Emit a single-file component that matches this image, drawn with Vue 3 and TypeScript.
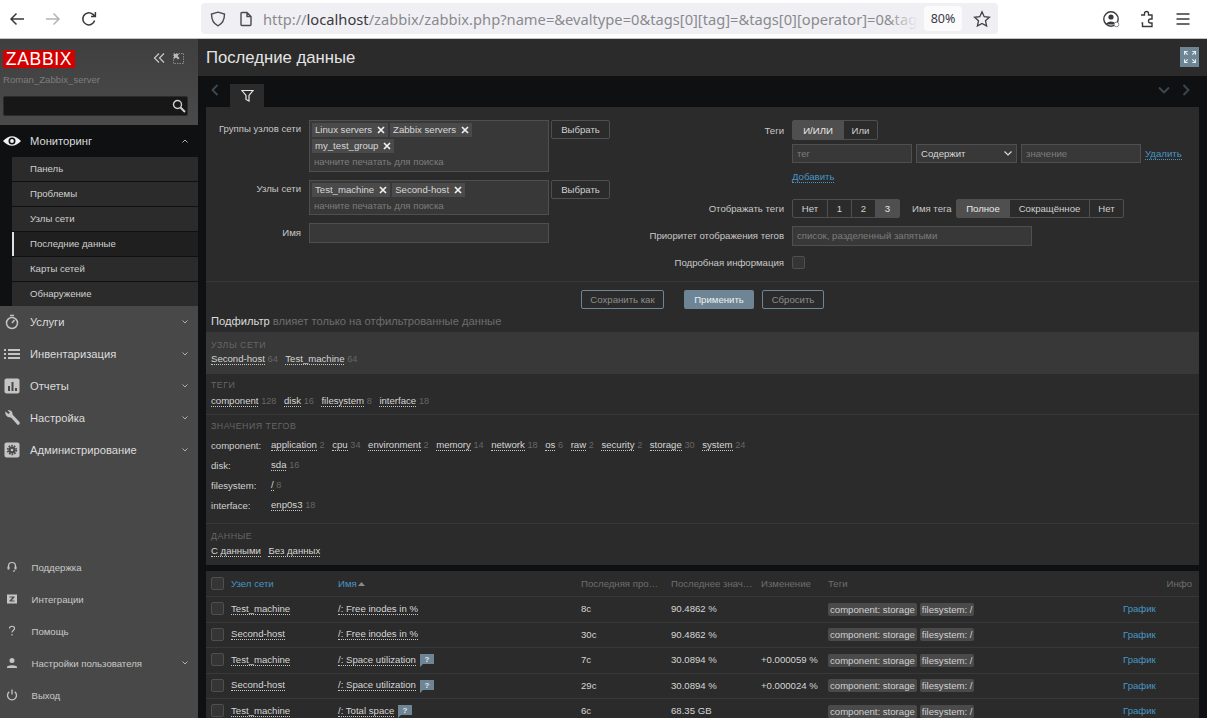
<script setup lang="ts">
const subItems = [
  { label: 'Панель' }, { label: 'Проблемы' }, { label: 'Узлы сети' },
  { label: 'Последние данные', active: true }, { label: 'Карты сетей' }, { label: 'Обнаружение' },
]
const mainItems = [
  { label: 'Услуги', icon: 'clock' }, { label: 'Инвентаризация', icon: 'list' }, { label: 'Отчеты', icon: 'chart' },
  { label: 'Настройка', icon: 'wrench' }, { label: 'Администрирование', icon: 'gear' },
]
const bottomItems = [
  { label: 'Поддержка', icon: 'head' }, { label: 'Интеграции', icon: 'z' }, { label: 'Помощь', icon: 'q' },
  { label: 'Настройки пользователя', icon: 'user', chev: true }, { label: 'Выход', icon: 'power' },
]
const tagValues = [
  { k: 'component:', v: [['application', 2], ['cpu', 34], ['environment', 2], ['memory', 14], ['network', 18], ['os', 6], ['raw', 2], ['security', 2], ['storage', 30], ['system', 24]] },
  { k: 'disk:', v: [['sda', 16]] },
  { k: 'filesystem:', v: [['/', 8]] },
  { k: 'interface:', v: [['enp0s3', 18]] },
]
const rows = [
  { host: 'Test_machine', name: '/: Free inodes in %', hint: false, age: '8с', val: '90.4862 %', ch: '' },
  { host: 'Second-host', name: '/: Free inodes in %', hint: false, age: '30с', val: '90.4862 %', ch: '' },
  { host: 'Test_machine', name: '/: Space utilization', hint: true, age: '7с', val: '30.0894 %', ch: '+0.000059 %' },
  { host: 'Second-host', name: '/: Space utilization', hint: true, age: '29с', val: '30.0894 %', ch: '+0.000024 %' },
  { host: 'Test_machine', name: '/: Total space', hint: true, age: '6с', val: '68.35 GB', ch: '' },
]
const groupChips = ['Linux servers', 'Zabbix servers', 'my_test_group']
const hostChips = ['Test_machine', 'Second-host']
</script>

<template>
  <div class="page">
    <header class="browser">
      <svg class="bi b-back" width="16" height="16" viewBox="0 0 16 16"><path d="M15 8H2M7.500 2.500 2 8l5.500 5.500" fill="none" stroke="#3a3a3e" stroke-width="1.500"/></svg>
      <svg class="bi b-fwd" width="16" height="16" viewBox="0 0 16 16"><path d="M1 8h13M8.500 2.500 14 8l-5.500 5.500" fill="none" stroke="#b4b4b8" stroke-width="1.500"/></svg>
      <svg class="bi b-rel" width="16" height="16" viewBox="0 0 16 16"><path d="M13.600 9.500A6 6 0 1 1 11.600 3.200L14 5.200M14.400 1v4.600H10" fill="none" stroke="#3a3a3e" stroke-width="1.500"/></svg>
      <div class="urlbar">
        <svg class="shield" width="16" height="16" viewBox="0 0 16 16"><path d="M8 1.200 14.500 3c0 6-1.500 9.500-6.500 11.800C3 12.500 1.500 9 1.500 3z" fill="none" stroke="#4a4a4f" stroke-width="1.400"/></svg>
        <svg class="docicon" width="14" height="16" viewBox="0 0 14 16"><path d="M2 2.500Q2 1.500 3 1.500h5l4 4v8q0 1-1 1H3q-1 0-1-1z M8 1.500v4h4" fill="none" stroke="#4a4a4f" stroke-width="1.400"/></svg>
        <div class="url"><span class="dim">http://</span>localhost<span class="dim">/zabbix/zabbix.php?name=&amp;evaltype=0&amp;tags[0][tag]=&amp;tags[0][operator]=0&amp;tag</span><i class="fade"></i></div>
        <div class="zoom">80%</div>
        <svg class="star" width="18" height="18" viewBox="0 0 18 18"><path d="M9 1.800 11.200 6.700l5.200.6-3.900 3.500 1.100 5.200L9 13.400 4.400 16l1.100-5.200L1.600 7.300l5.200-.6z" fill="none" stroke="#3f3f44" stroke-width="1.300"/></svg>
      </div>
      <svg class="bi b-acc" width="18" height="18" viewBox="0 0 18 18"><circle cx="9" cy="9" r="7.200" fill="none" stroke="#3a3a3e" stroke-width="1.400"/><circle cx="9" cy="7" r="2.600" fill="#3a3a3e"/><path d="M4 13.500q5-4 10 0v1H4z" fill="#3a3a3e"/><circle cx="14.500" cy="14.500" r="2.300" fill="#fff" stroke="#8a8a8e"/></svg>
      <svg class="bi b-ext" width="18" height="18" viewBox="0 0 18 18"><path d="M3 5h3.500V3.500a2 2 0 0 1 4 0V5H14v4H12.500a2 2 0 0 0 0 4H14v3.500H4.500V13H3.500" fill="none" stroke="#3a3a3e" stroke-width="1.400"/></svg>
      <svg class="bi b-menu" width="16" height="16" viewBox="0 0 16 16"><path d="M1.500 3h13M1.500 8h13M1.500 13h13" stroke="#3a3a3e" stroke-width="1.400"/></svg>
    </header>

    <div class="app">
      <aside class="side">
        <div class="brand">
          <div class="brand-top">
            <span class="logo">ZABBIX</span>
            <span class="brand-tools">
              <svg width="12" height="12" viewBox="0 0 12 12"><path d="M6 1.500 1.500 6 6 10.500M11 1.500 6.500 6l4.500 4.500" fill="none" stroke="#c8c8c8" stroke-width="1.200"/></svg>
              <svg width="11" height="11" viewBox="0 0 11 11"><path d="M.5.500h10v10H.5z" fill="none" stroke="#8a8a8a" stroke-dasharray="1.500 1"/><path d="M1 1h5L4.500 3 6.500 5 5 6.500 3 4.500 1 6z" fill="#bbb"/></svg>
            </span>
          </div>
          <div class="server">Roman_Zabbix_server</div>
          <div class="search">
            <svg width="14" height="14" viewBox="0 0 14 14"><circle cx="5.500" cy="5.500" r="4" fill="none" stroke="#d0d0d0" stroke-width="1.400"/><path d="m8.500 8.500 4.500 4.500" stroke="#d0d0d0" stroke-width="2"/></svg>
          </div>
        </div>

        <div class="monitor">
          <div class="mrow top">
            <svg class="eye" width="18" height="12" viewBox="0 0 18 12"><path d="M0 6q9-9.500 18 0-9 9.500-18 0z" fill="#f2f2f2"/><circle cx="9" cy="6" r="3.500" fill="#0e1012"/><circle cx="9" cy="6" r="1.900" fill="#f2f2f2"/></svg>
            <span class="mlabel">Мониторинг</span>
            <svg class="chev" width="6" height="4" viewBox="0 0 6 4"><path d="m.5 3.500 2.500-2.500 2.500 2.500" fill="none" stroke="#b0b0b0"/></svg>
          </div>
          <div class="subs">
            <div v-for="s in subItems" :key="s.label" class="sub" :class="{ active: s.active }">{{ s.label }}</div>
          </div>
        </div>

        <div class="mains">
          <div v-for="m in mainItems" :key="m.label" class="mrow">
            <svg class="micon" width="16" height="16" viewBox="0 0 16 16">
              <g v-if="m.icon === 'clock'" fill="none" stroke="#c4c4c4" stroke-width="1.500"><circle cx="8" cy="9" r="5.500"/><path d="M6 1.500h4M8 9l2.500-3"/></g>
              <g v-else-if="m.icon === 'list'" fill="#c4c4c4"><path d="M0 3h2v2H0zM4 3h12v2H4zM0 7h2v2H0zM4 7h12v2H4zM0 11h2v2H0zM4 11h12v2H4z"/></g>
              <g v-else-if="m.icon === 'chart'"><rect x=".5" y=".5" width="15" height="15" rx="2" fill="#c4c4c4"/><path d="M4 8h2v5H4zM7.500 4h2v9h-2zM11 10h2v3h-2z" fill="#484848"/></g>
              <path v-else-if="m.icon === 'wrench'" d="M1.500 1.500 4.500 4 6 2.500 3.500.5C6-.5 9 1 8.500 4.500L15.500 12c.6 1 .2 2.500-1.800 3L7 7.500C3.500 8 .5 5 1.500 1.500z" fill="#c4c4c4"/>
              <g v-else><rect x=".5" y=".5" width="15" height="15" rx="2" fill="#c4c4c4"/><circle cx="8" cy="8" r="4.300" fill="none" stroke="#484848" stroke-width="1.800" stroke-dasharray="1.600 1.100"/><circle cx="8" cy="8" r="3.600" fill="#484848"/><circle cx="8" cy="8" r="1.300" fill="#c4c4c4"/></g>
            </svg>
            <span class="mlabel">{{ m.label }}</span>
            <svg class="chev" width="6" height="4" viewBox="0 0 6 4"><path d="m.5.500 2.500 2.500 2.500-2.500" fill="none" stroke="#b0b0b0"/></svg>
          </div>
        </div>

        <div class="bottom">
          <div v-for="b in bottomItems" :key="b.label" class="brow">
            <svg class="bicon" width="12" height="12" viewBox="0 0 12 12">
              <g v-if="b.icon === 'head'"><path d="M2.500 7V5a3.500 3.500 0 0 1 7 0v2M9 9.500 7 10.500" fill="none" stroke="#c4c4c4" stroke-width="1.200"/><path d="M1.500 5.500h2v3h-2zM8.500 5.500h2v3h-2z" fill="#c4c4c4"/></g>
              <g v-else-if="b.icon === 'z'"><rect x="1" y="1.500" width="10" height="9" fill="#c4c4c4"/><path d="M3.500 3.500h5v1l-3 3h3v1h-5v-1l3-3h-3z" fill="#484848"/></g>
              <path v-else-if="b.icon === 'user'" d="M3.500 3.500a2.500 2.500 0 1 1 5 0 2.500 2.500 0 0 1-5 0zM1 9.500q5-2.500 10 0V11H1z" fill="#c4c4c4"/>
              <path v-else-if="b.icon === 'power'" d="M6 .5v5M3.300 2.800a4.500 4.500 0 1 0 5.400 0" fill="none" stroke="#c4c4c4" stroke-width="1.300"/>
              <path v-else d="M3.500 3.500C3.500.5 8.500.5 8.500 3.500c0 2-2.500 2-2.500 4M6 9v1.500" fill="none" stroke="#c4c4c4" stroke-width="1.200"/>
            </svg>
            <span class="blabel">{{ b.label }}</span>
            <svg v-if="b.chev" class="chev" width="6" height="4" viewBox="0 0 6 4"><path d="m.5.500 2.500 2.500 2.500-2.500" fill="none" stroke="#b0b0b0"/></svg>
          </div>
        </div>
      </aside>

      <main class="main">
        <div class="head">
          <h1>Последние данные</h1>
          <div class="fs">
            <svg width="18" height="18" viewBox="0 0 18 18" fill="none" stroke="#e8eef2" stroke-width="1.400"><path d="M2 6V2h4M16 6V2h-4M2 12v4h4M16 12v4h-4M3 3l3 3M15 3l-3 3M3 15l3-3M15 15l-3-3"/></svg>
          </div>
        </div>

        <div class="tabs">
          <svg class="nav-l" width="8" height="12" viewBox="0 0 8 12"><path d="M6.500 1 1.500 6l5 5" fill="none" stroke="#3e4a52" stroke-width="1.800"/></svg>
          <div class="tab">
            <svg width="13" height="13" viewBox="0 0 13 13"><path d="M1 1.500h11L8 6.500v5.500L5 10.500v-4z" fill="none" stroke="#e8e8e8" stroke-width="1.200"/></svg>
          </div>
          <span class="grow"></span>
          <svg width="12" height="8" viewBox="0 0 12 8"><path d="m1 1.500 5 5 5-5" fill="none" stroke="#3e4a52" stroke-width="1.800"/></svg>
          <svg class="nav-r" width="8" height="12" viewBox="0 0 8 12"><path d="m1.500 1 5 5-5 5" fill="none" stroke="#3e4a52" stroke-width="1.800"/></svg>
        </div>

        <section class="panel">
          <div class="form">
            <div class="col-l">
              <div class="fr">
                <label>Группы узлов сети</label>
                <div class="ms h52">
                  <div class="chips">
                    <span v-for="c in groupChips" :key="c" class="chip">{{ c }}<svg width="8" height="8" viewBox="0 0 8 8"><path d="m1 1 6 6M7 1 1 7" stroke="#f0f0f0" stroke-width="1.700"/></svg></span>
                  </div>
                  <div class="ph">начните печатать для поиска</div>
                </div>
                <button class="sel">Выбрать</button>
              </div>
              <div class="fr">
                <label>Узлы сети</label>
                <div class="ms h35">
                  <div class="chips">
                    <span v-for="c in hostChips" :key="c" class="chip">{{ c }}<svg width="8" height="8" viewBox="0 0 8 8"><path d="m1 1 6 6M7 1 1 7" stroke="#f0f0f0" stroke-width="1.700"/></svg></span>
                  </div>
                  <div class="ph">начните печатать для поиска</div>
                </div>
                <button class="sel">Выбрать</button>
              </div>
              <div class="fr mid">
                <label>Имя</label>
                <div class="inp name"></div>
              </div>
            </div>

            <div class="col-r">
              <div class="rr r1">
                <label>Теги</label>
                <div class="seg"><span class="on w-and">И/ИЛИ</span><span class="w-or">Или</span></div>
              </div>
              <div class="rr r2">
                <label></label>
                <div class="tagrow">
                  <div class="inp t1 ph2">тег</div>
                  <div class="inp t2">Содержит<svg width="8" height="5" viewBox="0 0 8 5"><path d="m.5.500 3.500 3.500 3.500-3.500" fill="none" stroke="#e0e0e0" stroke-width="1.100"/></svg></div>
                  <div class="inp t1 ph2">значение</div>
                  <a class="lnk">Удалить</a>
                </div>
              </div>
              <div class="rr r3"><label></label><a class="lnk">Добавить</a></div>
              <div class="rr r4">
                <label>Отображать теги</label>
                <div class="seg"><span class="n1">Нет</span><span class="n2">1</span><span class="n2">2</span><span class="on n2">3</span></div>
                <span class="lab2">Имя тега</span>
                <div class="seg"><span class="on n3">Полное</span><span class="n4">Сокращённое</span><span class="n1">Нет</span></div>
              </div>
              <div class="rr r5">
                <label>Приоритет отображения тегов</label>
                <div class="inp prio ph2">список, разделенный запятыми</div>
              </div>
              <div class="rr r6">
                <label>Подробная информация</label>
                <span class="cb small"></span>
              </div>
            </div>
          </div>

          <div class="actions">
            <button class="out w83">Сохранить как</button>
            <button class="apply">Применить</button>
            <button class="out w62">Сбросить</button>
          </div>

          <div class="subf"><span>Подфильтр</span> <em>влияет только на отфильтрованные данные</em></div>

          <div class="sec s-hosts">
            <div class="st">Узлы сети</div>
            <div class="vals">
              <span class="it"><u>Second-host</u> <i>64</i></span>
              <span class="it"><u>Test_machine</u> <i>64</i></span>
            </div>
          </div>
          <div class="sec s-tags">
            <div class="st">Теги</div>
            <div class="vals">
              <span class="it"><u>component</u> <i>128</i></span>
              <span class="it"><u>disk</u> <i>16</i></span>
              <span class="it"><u>filesystem</u> <i>8</i></span>
              <span class="it"><u>interface</u> <i>18</i></span>
            </div>
          </div>
          <div class="sec s-vals">
            <div class="st">Значения тегов</div>
            <div v-for="t in tagValues" :key="t.k" class="tv">
              <span class="tk">{{ t.k }}</span>
              <div class="vals">
                <span v-for="v in t.v" :key="v[0]" class="it"><u>{{ v[0] }}</u> <i>{{ v[1] }}</i></span>
              </div>
            </div>
          </div>
          <div class="sec s-data">
            <div class="st">Данные</div>
            <div class="vals">
              <span class="it"><u>С данными</u></span>
              <span class="it"><u>Без данных</u></span>
            </div>
          </div>
        </section>

        <section class="table">
          <div class="tr th">
            <span class="c0"><span class="cb"></span></span>
            <span class="c1 blue">Узел сети</span>
            <span class="c2 blue">Имя <svg width="7" height="4" viewBox="0 0 7 4"><path d="M3.500 0 7 4H0z" fill="#8a8a8a"/></svg></span>
            <span class="c3">Последняя про…</span>
            <span class="c4">Последнее знач…</span>
            <span class="c5">Изменение</span>
            <span class="c6">Теги</span>
            <span class="c7"></span>
            <span class="c8">Инфо</span>
          </div>
          <div v-for="(r, i) in rows" :key="i" class="tr">
            <span class="c0"><span class="cb"></span></span>
            <span class="c1"><u>{{ r.host }}</u></span>
            <span class="c2"><u>{{ r.name }}</u>
              <svg v-if="r.hint" class="hint" width="14" height="13" viewBox="0 0 14 13"><path d="M0 0h14v10H3l-3 3z" fill="#6d8594"/><text x="7" y="7.800" text-anchor="middle" class="q">?</text></svg>
            </span>
            <span class="c3">{{ r.age }}</span>
            <span class="c4">{{ r.val }}</span>
            <span class="c5">{{ r.ch }}</span>
            <span class="c6"><span class="tg">component: storage</span><span class="tg">filesystem: /</span></span>
            <span class="c7 blue">График</span>
            <span class="c8"></span>
          </div>
        </section>
      </main>
    </div>
  </div>
</template>

<style>
html, body { margin: 0; height: 100%; overflow: hidden; background: #0e1012; }
</style>

<style scoped>
.page { width: 1207px; height: 718px; overflow: hidden; display: flex; flex-direction: column; font-family: "Liberation Sans", Arial, sans-serif; font-size: 9.6px; color: #d6d6d6; }
button { font-family: inherit; font-size: 9.6px; padding: 0; margin: 0; background: none; cursor: pointer; }

/* browser */
.browser { height: 38px; flex: none; box-sizing: content-box; background: #fff; border-bottom: 1px solid #c4c4c4; display: flex; align-items: center; }
.bi { flex: none; }
.b-back { margin-left: 9px; }
.b-fwd { margin-left: 20px; }
.b-rel { margin-left: 20px; }
.urlbar { margin-left: 104px; margin-top: -1px; width: 797px; height: 31px; background: #f0f0f4; border-radius: 4px; display: flex; align-items: center; flex: none; }
.shield { margin-left: 9px; flex: none; }
.docicon { margin-left: 13px; flex: none; }
.url { margin-left: 10px; width: 655px; overflow: hidden; white-space: nowrap; font-family: "Noto Sans", sans-serif; font-size: 14.700px; color: #3a3a3e; position: relative; flex: none; }
.dim { color: #8a8a8e; }
.fade { position: absolute; right: 0; top: 0; bottom: 0; width: 30px; background: linear-gradient(90deg, rgba(240,240,244,0), #f0f0f4); }
.zoom { margin-left: 6px; width: 38px; height: 25px; background: #fbfbfc; border-radius: 4px; display: flex; align-items: center; justify-content: center; font-family: "Noto Sans", sans-serif; font-size: 12.500px; color: #3a3a4a; flex: none; }
.star { margin-left: 11px; flex: none; }
.b-acc { margin-left: 104px; }
.b-ext { margin-left: 18px; }
.b-menu { margin-left: 19px; }

.app { flex: 1; display: flex; min-height: 0; }

/* sidebar */
.side { width: 198px; flex: none; background: #484848; display: flex; flex-direction: column; }
.brand { height: 86px; box-sizing: border-box; padding: 11px 10px 0 3px; background: linear-gradient(#3f3f3f, #4a4a4a); flex: none; }
.brand-top { display: flex; align-items: center; justify-content: space-between; height: 18px; }
.logo { background: #d40000; color: #fff; font-size: 17.500px; line-height: 18px; height: 18px; width: 72px; text-align: center; letter-spacing: .7px; overflow: hidden; }
.brand-tools { display: flex; gap: 8px; align-items: center; margin-right: 4px; margin-top: -2px; }
.server { margin-top: 6px; color: #7d7d7d; font-size: 9.600px; line-height: 12px; }
.search { margin-top: 10px; width: 185px; height: 20px; box-sizing: border-box; background: #171717; border: 1px solid #2b2b2b; border-radius: 2px; display: flex; align-items: center; justify-content: flex-end; padding-right: 1px; }
.monitor { background: #0e1012; flex: none; }
.mrow { height: 32px; display: flex; align-items: center; position: relative; color: #dcdcdc; }
.eye { position: absolute; left: 3px; }
.micon { position: absolute; left: 4px; }
.mlabel { margin-left: 30px; font-size: 11.200px; }
.chev { position: absolute; left: 182px; }
.subs { margin-left: 12px; }
.sub { height: 25px; box-sizing: border-box; padding: 0 0 2px 18px; background: #2b2b2b; border-bottom: 1px solid #0e1012; display: flex; align-items: center; color: #d0d0d0; }
.sub:last-child { border-bottom: 0; height: 24px; }
.sub.active { background: #1f1f1f; box-shadow: inset 2px 0 0 #e0e0e0; }
.mains { flex: none; }
.bottom { margin-top: auto; padding-bottom: 7px; }
.brow { height: 32px; display: flex; align-items: center; position: relative; }
.bicon { position: absolute; left: 6px; }
.blabel { margin-left: 31.500px; color: #c8c8c8; }

/* main */
.main { flex: 1; min-width: 0; background: #0e1012; display: flex; flex-direction: column; padding: 0 8px; }
.head { height: 37px; flex: none; margin: 0 -8px; padding: 0 8px; background: #2b2b2b; display: flex; align-items: center; justify-content: space-between; }
h1 { margin: 0; font-size: 16.700px; font-weight: 400; color: #e4e4e4; }
.fs { width: 19px; height: 20px; background: #6d8594; display: flex; align-items: center; justify-content: center; margin-top: -1px; }
.fs svg { width: 14px; height: 14px; }
.tabs { height: 31px; flex: none; display: flex; align-items: center; }
.nav-l { margin-left: 5px; margin-top: -3px; }
.tab { margin-left: 11px; width: 34px; height: 23px; background: #2b2b2b; align-self: flex-end; display: flex; align-items: center; justify-content: center; }
.grow { flex: 1; }
.tabs > svg:nth-last-child(2) { margin-top: -3px; }
.nav-r { margin-left: 12px; margin-right: 9px; margin-top: -3px; }

.panel { height: 458px; flex: none; background: #2b2b2b; box-sizing: border-box; }
.form { height: 175px; box-sizing: border-box; padding-top: 13px; display: flex; border-bottom: 1px solid #383838; }
label { color: #c8c8c8; text-align: right; flex: none; }
.col-l { width: 414px; flex: none; display: flex; flex-direction: column; gap: 8px; }
.fr { display: flex; align-items: flex-start; }
.fr label { width: 95px; margin-right: 8px; line-height: 18px; }
.fr.mid { align-items: center; }
.fr.mid label { padding-bottom: 1px; }
.ms { width: 240px; box-sizing: border-box; background: #383838; border: 1px solid #4f4f4f; padding: 2px 2px 0; flex: none; }
.h52 { height: 52px; }
.h35 { height: 35px; }
.chips { display: flex; flex-wrap: wrap; gap: 2px; width: 200px; }
.chip { height: 14px; line-height: 14px; background: #4a4a4a; padding: 0 3px; color: #d8d8d8; white-space: nowrap; display: flex; align-items: center; gap: 5px; }
.ph { color: #7d7d7d; margin: 3px 0 0 2px; line-height: 12px; }
.sel { width: 59px; height: 19px; margin-left: 2px; padding-bottom: 1px; border: 1px solid #4f4f4f; border-radius: 2px; color: #d0d0d0; background: #2b2b2b; }
.inp { box-sizing: border-box; background: #383838; border: 1px solid #4f4f4f; flex: none; }
.name { width: 240px; height: 20px; }
.col-r { flex: 1; }
.rr { display: flex; align-items: center; }
.rr label { width: 164px; margin-right: 8px; }
.r1 { height: 20px; }
.r2 { height: 19px; margin-top: 4px; }
.r3 { height: 14px; margin-top: 7px; }
.r4 { height: 19px; margin-top: 15px; }
.r5 { height: 20px; margin-top: 8px; }
.r5 label { padding-bottom: 1px; }
.r6 { height: 13px; margin-top: 10px; }
.seg { display: flex; height: 100%; box-sizing: border-box; border: 1px solid #4f4f4f; border-radius: 2px; background: #2b2b2b; }
.seg span { display: flex; align-items: center; justify-content: center; border-left: 1px solid #4f4f4f; color: #d0d0d0; box-sizing: border-box; }
.seg span:first-child { border-left: 0; }
.seg .on { background: #4f4f4f; color: #e8e8e8; }
.w-and { width: 50px; }
.w-or { width: 34px; }
.n1 { width: 34px; }
.n2 { width: 24px; }
.n3 { width: 52px; }
.n4 { width: 80px; }
.lab2 { margin: 0 5px 0 12px; color: #c8c8c8; width: 39px; white-space: nowrap; }
.tagrow { display: flex; align-items: center; height: 100%; }
.tagrow .inp { height: 19px; display: flex; align-items: center; padding: 0 4px; }
.t1 { width: 120px; }
.t2 { width: 101px; margin: 0 4px; justify-content: space-between; color: #d6d6d6; }
.ph2 { color: #7d7d7d; }
.prio { width: 240px; height: 20px; display: flex; align-items: center; padding: 0 4px 1px; }
.lnk { color: #4796c4; border-bottom: 1px dotted #4796c4; line-height: 11px; }
.tagrow .lnk { margin-left: 4px; }
.cb { display: block; width: 11px; height: 11px; border: 1px solid #4f4f4f; border-radius: 2px; background: #353535; }
.actions { height: 27px; display: flex; align-items: flex-end; justify-content: center; }
.actions button { height: 19px; border-radius: 2px; }
.out { border: 1px solid #6d8594; color: #8d8d8d; }
.w83 { width: 83px; margin-right: 20px; }
.w62 { width: 62px; }
.apply { width: 70px; margin-right: 8px; border: 0; background: #6d8594; color: #f0f0f0; }
.subf { height: 23px; padding-left: 5px; display: flex; align-items: center; gap: 3px; font-size: 11.200px; }
.subf span { color: #dcdcdc; }
.subf em { font-style: normal; color: #6e6e6e; }
.sec { box-sizing: border-box; padding-left: 5px; }
.st { text-transform: uppercase; font-size: 8.800px; letter-spacing: .5px; color: #666; line-height: 11px; }
.vals { display: flex; gap: 7.500px; align-items: center; }
.it { white-space: nowrap; }
.it u, .c1 u, .c2 u { text-decoration: none; border-bottom: 1px dotted #c8c8c8; color: #d6d6d6; line-height: 11px; display: inline-block; }
.it i { font-style: normal; color: #666; font-size: 9.200px; }
.s-hosts { height: 42px; background: #383838; padding-top: 8px; }
.s-hosts .vals { margin-top: 2px; }
.s-tags { height: 41px; padding-top: 6px; border-bottom: 1px solid #383838; }
.s-tags .vals { margin-top: 4px; }
.s-vals { height: 109px; padding-top: 6px; border-bottom: 1px solid #383838; }
.tv { display: flex; height: 20px; align-items: center; }
.s-vals .st { margin-bottom: 3px; }
.tk { width: 60px; color: #d0d0d0; }
.s-data { padding-top: 7px; }
.s-data .vals { margin-top: 3px; }

/* table */
.table { margin-top: 6px; background: #2b2b2b; flex: none; }
.tr { height: 25.500px; box-sizing: border-box; display: grid; grid-template-columns: 25px 107px 243px 90px 90px 67px 295px 43px 33px; padding-bottom: 1px; align-items: center; border-bottom: 1px solid #383838; }
.th { height: 26px; padding-bottom: 0; color: #6e6e6e; }
.c0 { padding-left: 5px; }
.tr .cb { width: 13px; height: 13px; box-sizing: border-box; }
.c2 { display: flex; align-items: center; gap: 4px; }
.c3, .c4, .c5 { white-space: nowrap; }
.c6 { display: flex; gap: 3px; margin-top: 1px; }
.th .c6 { margin-top: 0; }
.tg { background: #4a4a4a; border-radius: 2px; padding: 0 2px; line-height: 13px; color: #d0d0d0; white-space: nowrap; }
.c8 { text-align: right; white-space: nowrap; padding-right: 7px; }
.blue { color: #4796c4; }
.th .c2 svg { margin-left: -3px; }
.hint { margin-top: 2px; }
.q { font-size: 8px; font-weight: 700; fill: #e4e9ec; font-family: "Liberation Sans", sans-serif; }
</style>
